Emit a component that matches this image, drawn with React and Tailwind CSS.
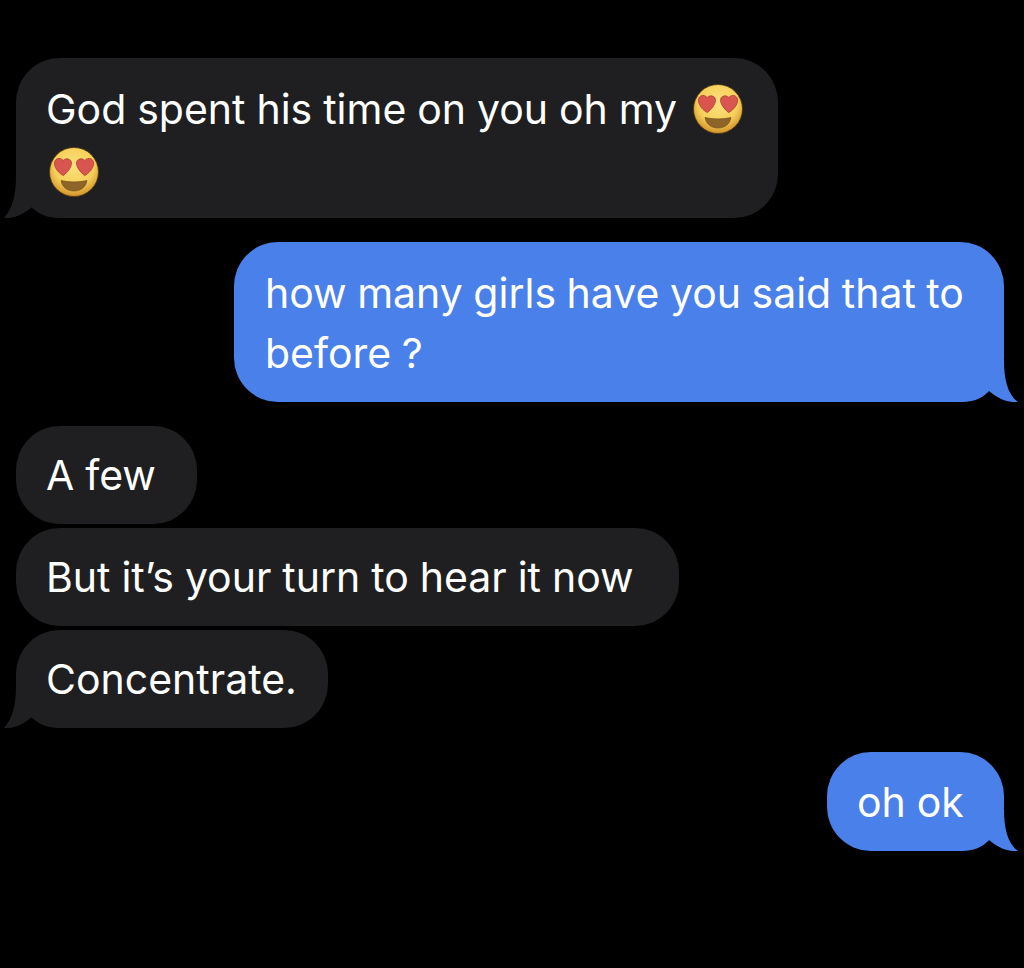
import React from 'react';

function HeartEyes({ className }) {
  return (
    <svg viewBox="0 0 50 50" className={className}>
      <defs>
        <radialGradient id="face" cx="50%" cy="38%" r="62%">
          <stop offset="0%" stopColor="#fbe27c" />
          <stop offset="65%" stopColor="#f6cf5a" />
          <stop offset="100%" stopColor="#d0922a" />
        </radialGradient>
      </defs>
      <circle cx="25" cy="25" r="24.5" fill="url(#face)" stroke="#4a3410" strokeWidth="0.8" />
      <path d="M5.5 17.5C4.5 11.5 11 9.5 14.2 13.5C16 11.6 18.6 11.4 20.6 12.6C23.4 14.4 22.6 18 21.4 20.4C19.8 23.6 17 26.4 14.4 28.6C10.6 26.6 6.4 22.6 5.5 17.5Z" fill="#d9554f" stroke="#b23a34" strokeWidth="0.8" />
      <path d="M44.5 17.5C45.5 11.5 39 9.5 35.8 13.5C34 11.6 31.4 11.4 29.4 12.6C26.6 14.4 27.4 18 28.6 20.4C30.2 23.6 33 26.4 35.6 28.6C39.4 26.6 43.6 22.6 44.5 17.5Z" fill="#d9554f" stroke="#b23a34" strokeWidth="0.8" />
      <path d="M12 33.5C19 35.4 31 35.4 38 33.5C37 40 31.6 44 25 44C18.4 44 13 40 12 33.5Z" fill="#8f6428" stroke="#6b4818" strokeWidth="0.6" />
    </svg>
  );
}

function LeftTail() {
  return (
    <svg viewBox="0 0 60 42" className="absolute bottom-0 left-[-12px] w-[60px] h-[42px]">
      <path d="M12 0C12 18 9 32 0 42C10 43 20 38 28 31C36 40 46 42 60 42L60 0Z" fill="#1f1f21" />
    </svg>
  );
}

function RightTail() {
  return (
    <svg viewBox="0 0 60 42" className="absolute bottom-0 right-[-14px] w-[60px] h-[42px]">
      <path d="M46 0C46 18 49 34 60 42C49 43 39 38 31 31C23 40 13 42 0 42L0 0Z" fill="#4a80ea" />
    </svg>
  );
}

function Bubble({ mine, tail, className = '', children }) {
  return (
    <div className={`relative rounded-[44px] pl-[30px] pr-[20px] text-white ${mine ? 'bg-[#4a80ea]' : 'bg-[#1f1f21]'} ${className}`}>
      {tail && (mine ? <RightTail /> : <LeftTail />)}
      <div className="relative">{children}</div>
    </div>
  );
}

export default function App() {
  return (
    <div className="w-[1024px] h-[968px] bg-black pt-[58px] pl-4 pr-5 flex flex-col items-start font-['Inter','Liberation_Sans',sans-serif] text-[41px] leading-[60px] [word-spacing:-0.6px]">
      <Bubble tail className="w-[762px] h-[160px] pt-[21px]">
        <span>God spent his time on you oh my </span>
        <HeartEyes className="inline-block w-[50px] h-[50px] align-[-10px] ml-[5px]" />
        <span> </span>
        <HeartEyes className="relative top-[3px] inline-block w-[50px] h-[50px] align-[-10px] ml-[3px]" />
      </Bubble>

      <Bubble mine tail className="self-end w-[770px] h-[160px] mt-[24px] pt-[21px]">
        <div className="ml-px [word-spacing:-1px]">how many girls have you said that to before ?</div>
      </Bubble>

      <Bubble className="w-[181px] h-[98px] mt-[24px] pt-[19px]">A few</Bubble>
      <Bubble className="w-[663px] h-[98px] mt-1 pt-[19px]">But it’s your turn to hear it now</Bubble>
      <Bubble tail className="w-[312px] h-[98px] mt-1 pt-[19px]">Concentrate.</Bubble>

      <Bubble mine tail className="self-end w-[177px] h-[99px] mt-[24px] pt-[20px]">oh ok</Bubble>
    </div>
  );
}
